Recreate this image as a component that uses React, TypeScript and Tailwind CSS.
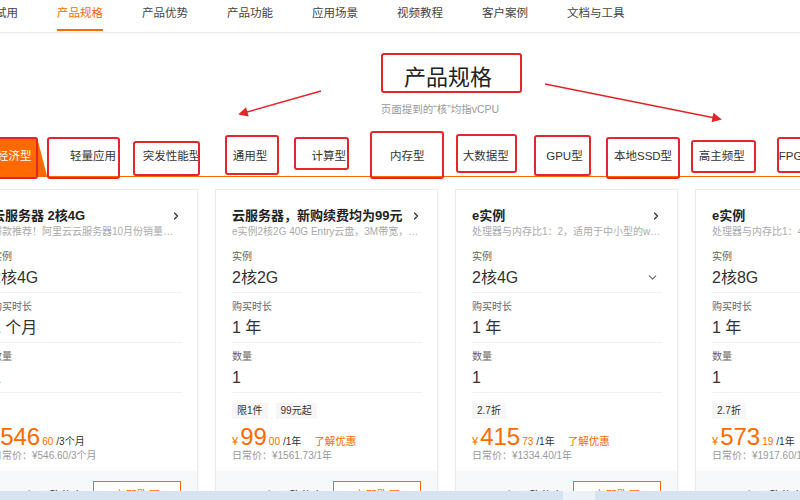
import { ChevronDown, ChevronRight } from "lucide-react";

const navItems = ["免费试用", "产品规格", "产品优势", "产品功能", "应用场景", "视频教程", "客户案例", "文档与工具"];

const tabs = ["经济型", "轻量应用", "突发性能型", "通用型", "计算型", "内存型", "大数据型", "GPU型", "本地SSD型", "高主频型", "FPGA型"];

interface Plan {
  title: string;
  desc: string;
  instance: string;
  select?: boolean;
  duration: string;
  tags: string[];
  int: string;
  dec: string;
  unit: string;
  promo: boolean;
  orig: string;
}

const plans: Plan[] = [
  {
    title: "云服务器 2核4G",
    desc: "爆款推荐！阿里云云服务器10月份销量冠军，限时特惠",
    instance: "2核4G",
    duration: "1 个月",
    tags: [],
    int: "546",
    dec: "60",
    unit: "/3个月",
    promo: false,
    orig: "日常价：¥546.60/3个月",
  },
  {
    title: "云服务器，新购续费均为99元",
    desc: "e实例2核2G 40G Entry云盘，3M带宽，新购续费同价",
    instance: "2核2G",
    duration: "1 年",
    tags: ["限1件", "99元起"],
    int: "99",
    dec: "00",
    unit: "/1年",
    promo: true,
    orig: "日常价：¥1561.73/1年",
  },
  {
    title: "e实例",
    desc: "处理器与内存比1：2，适用于中小型的web应用",
    instance: "2核4G",
    select: true,
    duration: "1 年",
    tags: ["2.7折"],
    int: "415",
    dec: "73",
    unit: "/1年",
    promo: true,
    orig: "日常价：¥1334.40/1年",
  },
  {
    title: "e实例",
    desc: "处理器与内存比1：4，适用于中小型数据库",
    instance: "2核8G",
    duration: "1 年",
    tags: ["2.7折"],
    int: "573",
    dec: "19",
    unit: "/1年",
    promo: true,
    orig: "日常价：¥1917.60/1年",
  },
];

// red annotation boxes drawn over the screenshot
const marks = [
  [-4, 138, 41, 40],
  [48, 138, 71, 40],
  [134, 142, 65, 33],
  [226, 136, 52, 38],
  [295, 138, 53, 31],
  [371, 132, 72, 46],
  [457, 135, 59, 37],
  [535, 136, 55, 39],
  [607, 138, 72, 40],
  [692, 141, 63, 31],
  [778, 138, 40, 34],
  [382, 54, 139, 38],
];

function Field({ label, value, select }: { label: string; value: string; select?: boolean }) {
  return (
    <div className="border-b border-[#f0f0f0] pt-[7px] pb-[4px]">
      <p className="h-[14px] text-[10px] leading-[14px] text-[#666]">{label}</p>
      <div className="mt-[3px] flex h-[21px] items-center justify-between">
        <span className="text-[16px] leading-[21px] text-[#333]">{value}</span>
        {select && <ChevronDown size={13} className="mr-[3px] text-[#666]" />}
      </div>
    </div>
  );
}

function PlanCard({ plan }: { plan: Plan }) {
  return (
    <div className="w-[223px] shrink-0 border border-[#ebebeb] bg-white shadow-[0_1px_4px_rgba(0,0,0,0.04)]">
      <div className="pt-[17px] pr-[15px] pl-[16px]">
        <div className="flex h-[17px] items-center justify-between">
          <span className="text-[13px] leading-[17px] font-bold text-[#222]">{plan.title}</span>
          <ChevronRight size={12} strokeWidth={2.5} className="text-[#333]" />
        </div>
        <p className="mt-[1px] h-[14px] truncate text-[10px] leading-[14px] text-[#aaa]">{plan.desc}</p>
        <div className="mt-[4px]">
          <Field label="实例" value={plan.instance} select={plan.select} />
          <Field label="购买时长" value={plan.duration} />
          <Field label="数量" value="1" />
        </div>
        <div className="mt-[10px] flex h-[16px] gap-[8px]">
          {plan.tags.map((t) => (
            <span key={t} className="bg-[#f6f6f6] px-[5px] text-[10px] leading-[16px] text-[#333]">
              {t}
            </span>
          ))}
        </div>
        <div className="mt-[6px] flex h-[24px] items-baseline text-[#ff6a00]">
          <span className="text-[11px]">¥</span>
          <span className="ml-[2px] text-[24px] leading-[24px]">{plan.int}</span>
          <span className="ml-[2px] text-[10px]">{plan.dec}</span>
          <span className="ml-[3px] text-[10px] text-[#333]">{plan.unit}</span>
          {plan.promo && <span className="ml-[13px] text-[10.5px]">了解优惠</span>}
        </div>
        <p className="h-[14px] text-[10px] leading-[14px] text-[#999]">{plan.orig}</p>
      </div>
      <div className="mt-[8px] flex h-[44px] items-start justify-end gap-[9px] bg-[#f7f8fa] pt-[10px] pr-[16px]">
        <span className="text-[11.5px] leading-[30px] text-[#333]">加入购物车</span>
        <button className="h-[30px] w-[88px] border border-[#ff6a00] bg-white text-[11.5px] text-[#ff6a00]">
          立即购买
        </button>
      </div>
    </div>
  );
}

export default function App() {
  return (
    <div className="relative h-[500px] w-[800px] overflow-hidden bg-white font-['Liberation_Sans','Noto_Sans_CJK_SC',sans-serif]">
      <nav className="h-[33px] border-b border-[#ececec] shadow-[0_1px_3px_rgba(0,0,0,0.04)]">
        <div className="ml-[-28px] flex h-full gap-[39px]">
          {navItems.map((n, i) => (
            <div key={n} className="relative flex h-full shrink-0 items-center pb-[4px]">
              <span className={`text-[11.5px] ${i === 1 ? "text-[#ff6a00]" : "text-[#444]"}`}>{n}</span>
              {i === 1 && <span className="absolute right-0 bottom-[1px] left-0 h-[2px] bg-[#ff6a00]" />}
            </div>
          ))}
        </div>
      </nav>

      <h2 className="mt-[30px] pl-[96px] text-center text-[22px] leading-[30px] text-[#222]">产品规格</h2>
      <p className="mt-[8px] pl-[80px] text-center text-[10.5px] leading-[16px] text-[#999]">页面提到的“核”均指vCPU</p>

      <div className="mt-[20px] border-b border-[#ff6a00]">
        <div className="ml-[-25px] flex h-[39px]">
          {tabs.map((t, i) => (
            <div key={t} className="relative flex h-full w-[78.6px] shrink-0 items-center justify-center">
              {i === 0 && (
                <span className="absolute inset-y-0 left-0 w-[72px] bg-[#ff6a00] [clip-path:polygon(0_0,86%_0,100%_100%,0_100%)]" />
              )}
              <span className={`relative text-[11.5px] ${i === 0 ? "text-white" : "text-[#333]"}`}>{t}</span>
            </div>
          ))}
        </div>
      </div>

      <div className="mt-[12px] ml-[-25px] flex gap-[17px]">
        {plans.map((p, i) => (
          <PlanCard key={i} plan={p} />
        ))}
      </div>

      <svg className="pointer-events-none absolute inset-0" width="800" height="500" viewBox="0 0 800 500">
        <defs>
          <marker id="head" viewBox="0 0 10 10" refX="8" refY="5" markerWidth="7" markerHeight="6" orient="auto">
            <path d="M0 0 L10 5 L0 10 Z" fill="#e3262b" />
          </marker>
        </defs>
        {marks.map(([x, y, w, h], i) => (
          <rect key={i} x={x} y={y} width={w} height={h} rx="2" fill="none" stroke="#e3262b" strokeWidth="2" />
        ))}
        <line x1="321" y1="91" x2="240" y2="114" stroke="#e3262b" strokeWidth="1.6" markerEnd="url(#head)" />
        <line x1="545" y1="84" x2="720" y2="119" stroke="#e3262b" strokeWidth="1.6" markerEnd="url(#head)" />
      </svg>

      <div className="absolute right-0 bottom-0 left-0 flex h-[9px] bg-[#d8e3f1]">
        <span className="ml-[563px] h-full w-[32px] bg-[#edf2f8]" />
      </div>
    </div>
  );
}
